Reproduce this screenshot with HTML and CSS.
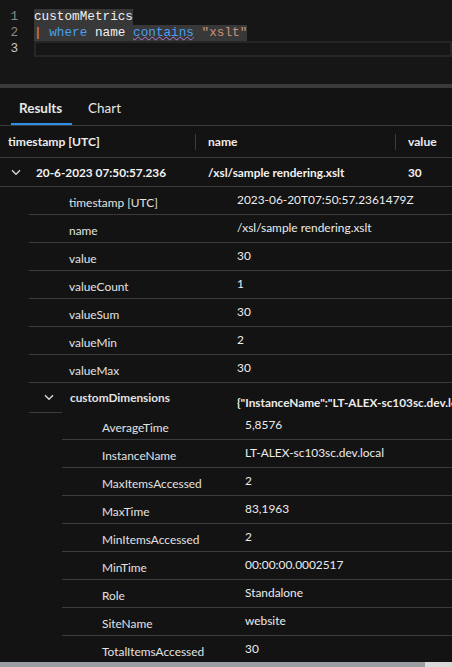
FILE: index.html
```html
<!DOCTYPE html>
<html>
<head>
<meta charset="utf-8">
<link rel="stylesheet" href="styles.css">
</head>
<body>
<div class="app">
  <div class="editor">
    <div class="line"><span class="ln">1</span><span class="code"><span class="hl"><span class="ident">customMetrics</span></span></span></div>
    <div class="line"><span class="ln">2</span><span class="code"><span class="hl"><span class="pipe">|</span> <span class="kw">where</span> <span class="ident">name</span> <span class="kw squiggle">contains</span> <span class="str">"xslt"</span></span></span></div>
    <div class="line current"><span class="ln ln-cur">3</span><span class="code curbox"></span></div>
  </div>
  <div class="splitter"></div>
  <div class="tabs">
    <div class="tab active">Results</div>
    <div class="tab">Chart</div>
  </div>
  <div class="results">
    <div class="thead">
      <div class="th">timestamp [UTC]</div>
      <div class="th"><span class="sep"></span>name</div>
      <div class="th"><span class="sep"></span>value</div>
    </div>
    <div class="trow">
      <div class="td first"><svg class="chev" width="10" height="7" viewBox="0 0 10 7"><polyline points="1,1.2 5,5.2 9,1.2" fill="none" stroke="#d6d6d6" stroke-width="1.4"/></svg>20-6-2023 07:50:57.236</div>
      <div class="td">/xsl/sample rendering.xslt</div>
      <div class="td">30</div>
    </div>
    <div class="details">
      <div class="drow"><div class="dl">timestamp [UTC]</div><div class="dv">2023-06-20T07:50:57.2361479Z</div></div>
      <div class="drow"><div class="dl">name</div><div class="dv">/xsl/sample rendering.xslt</div></div>
      <div class="drow"><div class="dl">value</div><div class="dv">30</div></div>
      <div class="drow"><div class="dl">valueCount</div><div class="dv">1</div></div>
      <div class="drow"><div class="dl">valueSum</div><div class="dv">30</div></div>
      <div class="drow"><div class="dl">valueMin</div><div class="dv">2</div></div>
      <div class="drow"><div class="dl">valueMax</div><div class="dv">30</div></div>
      <div class="drow cd"><div class="dl cdl"><svg class="chev2" width="10" height="7" viewBox="0 0 10 7"><polyline points="1,1.2 5,5.2 9,1.2" fill="none" stroke="#d6d6d6" stroke-width="1.4"/></svg>customDimensions</div><div class="dv cdv">{"InstanceName":"LT-ALEX-sc103sc.dev.local","Role":"Standalone"}</div></div>
      <div class="nested">
        <div class="gutter"></div>
        <div class="nrows">
          <div class="nrow"><div class="nl">AverageTime</div><div class="nv">5,8576</div></div>
          <div class="nrow"><div class="nl">InstanceName</div><div class="nv">LT-ALEX-sc103sc.dev.local</div></div>
          <div class="nrow"><div class="nl">MaxItemsAccessed</div><div class="nv">2</div></div>
          <div class="nrow"><div class="nl">MaxTime</div><div class="nv">83,1963</div></div>
          <div class="nrow"><div class="nl">MinItemsAccessed</div><div class="nv">2</div></div>
          <div class="nrow"><div class="nl">MinTime</div><div class="nv">00:00:00.0002517</div></div>
          <div class="nrow"><div class="nl">Role</div><div class="nv">Standalone</div></div>
          <div class="nrow"><div class="nl">SiteName</div><div class="nv">website</div></div>
          <div class="nrow last"><div class="nl">TotalItemsAccessed</div><div class="nv">30</div></div>
        </div>
      </div>
    </div>
  </div>
  <div class="hscroll"><div class="thumb"></div><div class="track"></div></div>
</div>
</body>
</html>
```
FILE: styles.css
```css
* { box-sizing: border-box; }
html, body { margin: 0; padding: 0; }
body {
  background: #131313;
  font-family: Lato, "Noto Sans", sans-serif;
  color: #e4e4e4;
  width: 452px;
  height: 667px;
  overflow: hidden;
}
.app {
  display: flex;
  flex-direction: column;
  height: 667px;
}
.editor {
  height: 84px;
  background: #161616;
  padding-top: 9px;
  font-family: "Liberation Mono", "DejaVu Sans Mono", monospace;
  font-size: 12.7px;
}
.line {
  display: flex;
  height: 16px;
  line-height: 16px;
}
.ln {
  width: 34px;
  padding-right: 16px;
  text-align: right;
  color: #8a8a8a;
  flex: none;
}
.ln-cur { color: #c8c8c8; }
.code {
  flex: 1;
  white-space: pre;
}
.hl {
  display: inline-block;
  height: 16px;
  background: #383838;
}
.ident { color: #f0f0f0; }
.kw { color: #4b9ff0; }
.str { color: #ce9178; }
.pipe { color: #e2a72a; }
.squiggle {
  text-decoration: underline wavy #b07ad8;
  text-decoration-thickness: 1px;
  text-underline-offset: 0px;
}
.curbox {
  border: 2px solid #262626;
  height: 16px;
}
.splitter {
  height: 4px;
  background: #3a3a3a;
}
.tabs {
  height: 38px;
  display: flex;
  padding-left: 11px;
  border-bottom: 1px solid #3b3b3b;
  font-size: 13.5px;
}
.tab {
  height: 37px;
  display: flex;
  align-items: center;
  padding: 2px 8px 0 8px;
  color: #e6e6e6;
  margin-right: 8px;
}
.tab.active {
  font-weight: 700;
  border-bottom: 2px solid #2e8ee8;
  padding-top: 4px;
  width: 61px;
}
.results {
  flex: 1;
  overflow: hidden;
  font-size: 11.9px;
  white-space: nowrap;
}
.thead, .trow {
  display: grid;
  grid-template-columns: 195px 200px 1fr;
  border-bottom: 1px solid #3b3b3b;
  font-weight: 700;
  font-size: 11.8px;
}
.thead { height: 32px; font-size: 12.1px; }
.trow { height: 29px; }
.th {
  display: flex;
  align-items: center;
  padding-left: 8px;
  color: #ececec;
}
.th .sep {
  width: 1px;
  height: 16px;
  background: #3b3b3b;
  margin-left: -8px;
  margin-right: 12px;
}
.td {
  display: flex;
  align-items: center;
  padding-left: 13px;
  color: #f2f2f2;
}
.td.first { padding-left: 11px; }
.chev { margin-right: 15px; }
.details { margin-left: 29px; }
.drow {
  display: grid;
  grid-template-columns: 208px 1fr;
  height: 28px;
  border-bottom: 1px solid #3b3b3b;
}
.dl {
  display: flex;
  align-items: center;
  padding-left: 40px;
  padding-top: 3px;
  color: #e2e2e2;
}
.dv {
  display: flex;
  align-items: center;
  padding-bottom: 3px;
  color: #ececec;
  overflow: hidden;
}
.drow.cd {
  height: 29px;
  border-bottom: none;
}
.cdl {
  font-weight: 700;
  font-size: 11.8px;
  padding-left: 15px;
  padding-top: 0;
  padding-bottom: 1px;
}
.chev2 { margin-right: 16px; }
.cdv {
  font-weight: 700;
  font-size: 11.8px;
  padding-bottom: 0;
  padding-top: 10px;
}
.nested { display: flex; }
.gutter {
  width: 33px;
  border-top: 1px solid #3b3b3b;
  flex: none;
}
.nrows { flex: 1; }
.nrow {
  display: grid;
  grid-template-columns: 183px 1fr;
  height: 28px;
  border-bottom: 1px solid #3b3b3b;
}
.nrow.last { border-bottom: none; }
.nl {
  display: flex;
  align-items: center;
  padding-left: 40px;
  padding-top: 3px;
  color: #e2e2e2;
}
.nv {
  display: flex;
  align-items: center;
  padding-bottom: 3px;
  color: #ececec;
}
.hscroll {
  height: 5px;
  display: flex;
  flex: none;
}
.thumb { width: 425px; background: #9a9ea2; }
.track { flex: 1; background: #dadada; }
```
